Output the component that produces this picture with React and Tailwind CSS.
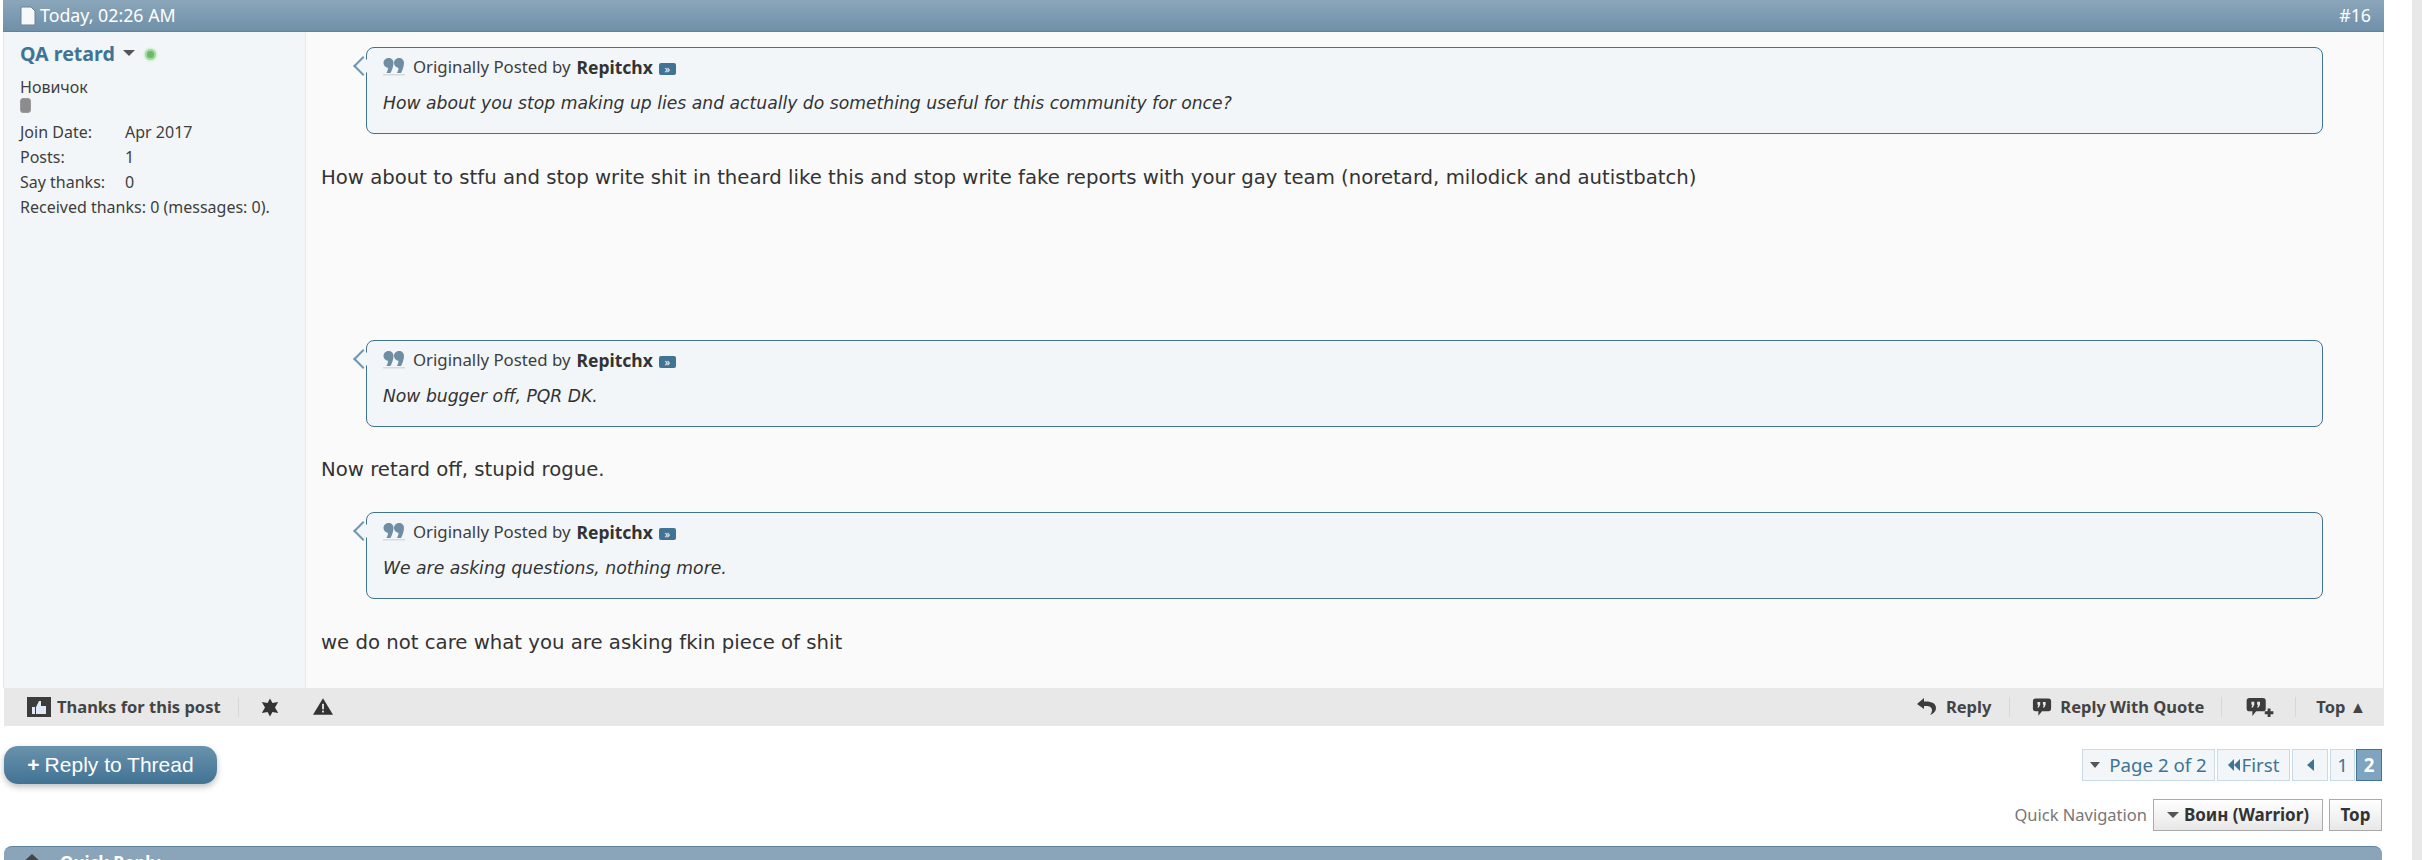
import React from 'react';

const tahoma = "font-['Noto_Sans',sans-serif]";
const verdana = "font-['DejaVu_Sans',sans-serif]";

// Speech-bubble quote marks used in the quote header
function QuoteMarks() {
  return (
    <svg width="22" height="18" viewBox="0 0 22 18" className="shrink-0">
      <path d="M5.500 0C8.500 0 10.500 2 10.500 5c0 3.500-1.500 7-3 10H3.500c1-2 1.500-3.500 1.500-5C2.500 9.500 .5 7.500 .5 5S2.500 0 5.500 0z" fill="#6f8ea3" />
      <path d="M16 0c3 0 5 2 5 5 0 3.500-1.500 7-3 10h-4c1-2 1.500-3.500 1.500-5-2.500-.5-4.500-2.500-4.500-5S13 0 16 0z" fill="#6f8ea3" />
      <rect x="0" y="16" width="22" height="1.500" fill="#d5dade" />
    </svg>
  );
}

function Quote({ text }) {
  return (
    <div className={`relative ml-[60px] mr-[60px] h-[87px] rounded-[8px] border border-[#417394] bg-[#f2f6f9] pl-[16px] pt-[7px] ${tahoma}`}>
      <div className="absolute left-[-11px] top-[11px] h-[14px] w-[14px] rotate-45 border-b-2 border-l-2 border-[#6f97b1] bg-[#f2f6f9]" />
      <div className="relative flex h-[24px] items-center text-[16.8px] text-[#3e3e3e]">
        <QuoteMarks />
        <span className="ml-[8px]">Originally Posted by</span>
        <b className="ml-[6px] text-[17.5px] text-[#333]">Repitchx</b>
        <span className="ml-[6px] mt-[3px] flex h-[12px] w-[17px] items-center justify-center rounded-[2px] bg-[#417394] text-[11px] leading-none text-white">»</span>
      </div>
      <div className={`mt-[11px] text-[17.2px] leading-[26px] italic text-[#333] ${verdana}`}>{text}</div>
    </div>
  );
}

function PostText({ children, className }) {
  return <p className={`ml-[15px] h-[20px] text-[19.7px] leading-[20px] text-[#333] ${verdana} ${className}`}>{children}</p>;
}

function StatRow({ label, value }) {
  return (
    <div className="flex h-[25px] items-center">
      <span className="w-[105px]">{label}</span>
      <span>{value}</span>
    </div>
  );
}

function ThanksIcon() {
  return (
    <svg width="24" height="20" viewBox="0 0 24 20" className="shrink-0">
      <rect width="24" height="20" fill="#3c3c3c" />
      <path d="M5 10h3v7H5zM9 10l3-6h2v5h5v8H9z" fill="#dfe9f5" />
    </svg>
  );
}

function StarIcon() {
  return (
    <svg width="20" height="19" viewBox="0 0 22 20" className="shrink-0">
      <path d="M11 0l2.700 5 6.300-1-3.500 6 3.500 6-6.300-1L11 20l-2.700-5-6.300 1 3.500-6L2 4l6.300 1z" fill="#333" />
    </svg>
  );
}

function WarnIcon() {
  return (
    <svg width="20" height="18" viewBox="0 0 22 19" className="shrink-0">
      <path d="M11 0l11 18H0z" fill="#333" />
      <rect x="10" y="6" width="2" height="6" fill="#e8e8e8" />
      <rect x="10" y="13.500" width="2" height="2" fill="#e8e8e8" />
    </svg>
  );
}

function ReplyIcon() {
  return (
    <svg width="22" height="20" viewBox="0 0 22 20" className="shrink-0">
      <path d="M8 1L1 7l7 5V9c5-.5 8 1 8 4 0 2-1 4-2 5 4-1.500 6-4 6-7 0-5-5-7-12-6.500z" fill="#3c3c3c" />
    </svg>
  );
}

function BubbleIcon({ plus }) {
  return (
    <svg width={plus ? 30 : 20} height="21" viewBox={plus ? '0 0 30 22' : '0 0 22 22'} className="shrink-0">
      <path d="M4 1h14a3 3 0 0 1 3 3v8a3 3 0 0 1-3 3h-7l-4 5v-5H4a3 3 0 0 1-3-3V4a3 3 0 0 1 3-3z" fill="#3c3c3c" />
      <path d="M6 5h3v3l-1.500 3H6l1-3H6zM12 5h3v3l-1.500 3H12l1-3h-1z" fill="#e8e8e8" />
      {plus && <path d="M23 12h3v3h3v3h-3v3h-3v-3h-3v-3h3z" fill="#3c3c3c" />}
    </svg>
  );
}

function Divider() {
  return <span className="h-[20px] w-px bg-[#d8d8d8]" />;
}

function PageBox({ children, className }) {
  return (
    <div className={`flex h-[32px] items-center justify-center border border-[#c9dbe8] bg-[#f2f6f9] text-[#417394] ${className}`}>
      {children}
    </div>
  );
}

function App() {
  return (
    <div className={`flex h-[860px] w-full overflow-hidden bg-white ${tahoma}`}>
      <div className="ml-[3px] w-[2381px] shrink-0">
        {/* post header */}
        <div className="flex h-[32px] items-center justify-between border-b border-[#5d83a0] bg-gradient-to-b from-[#8ba6ba] to-[#6f90a9] pl-[17px] pr-[13px] text-[17.8px] text-white">
          <div className="flex items-center gap-[4px]">
            <svg width="16" height="20" viewBox="0 0 16 20"><path d="M1 1h10l4 4v14H1z" fill="#f6f8f9" stroke="#6a8196" /></svg>
            <span>Today, 02:26 AM</span>
          </div>
          <span>#16</span>
        </div>

        {/* post body */}
        <div className="flex h-[656px] border-l border-[#e6e6e6]">
          <div className="w-[302px] shrink-0 border-r border-[#e6eaed] bg-[#f2f6f9] pl-[16px] pt-[7px] text-[16px] text-[#3e3e3e]">
            <div className="flex h-[30px] items-center">
              <span className="text-[19.6px] font-bold text-[#417394]">QA retard</span>
              <span className="ml-[8px] mb-[3px] h-0 w-0 border-x-[6px] border-t-[6px] border-x-transparent border-t-[#555]" />
              <span className="ml-[10px] h-[11px] w-[11px] rounded-full border-2 border-[#9fdc9a] bg-[#6fb86a] shadow-[0_0_3px_#9fdc9a]" />
            </div>
            <div className="mt-[8px] h-[20px] leading-[20px]">Новичок</div>
            <div className="mt-px h-[15px] w-[11px] rounded-[3px] border border-[#9a9a9a] bg-[#8c8c8c]" />
            <div className="mt-[6px]">
              <StatRow label="Join Date:" value="Apr 2017" />
              <StatRow label="Posts:" value="1" />
              <StatRow label="Say thanks:" value="0" />
              <div className="flex h-[25px] items-center">Received thanks: 0 (messages: 0).</div>
            </div>
          </div>
          <div className="flex-1 border-r border-[#e6e6e6] bg-[#fafafa] pt-[15px]">
            <Quote text="How about you stop making up lies and actually do something useful for this community for once?" />
            <PostText className="mt-[34px]">How about to stfu and stop write shit in theard like this and stop write fake reports with your gay team (noretard, milodick and autistbatch)</PostText>
            <div className="mt-[152px]"><Quote text="Now bugger off, PQR DK." /></div>
            <PostText className="mt-[33px]">Now retard off, stupid rogue.</PostText>
            <div className="mt-[32px]"><Quote text="We are asking questions, nothing more." /></div>
            <PostText className="mt-[34px]">we do not care what you are asking fkin piece of shit</PostText>
          </div>
        </div>

        {/* post footer */}
        <div className="ml-px flex h-[38px] items-center justify-between bg-[#e8e8e8] pl-[23px] pr-[18px] text-[16.5px] font-bold text-[#444]">
          <div className="flex items-center">
            <ThanksIcon />
            <span className="ml-[6px]">Thanks for this post</span>
            <span className="ml-[17px] flex"><Divider /></span>
            <span className="ml-[21px] flex"><StarIcon /></span>
            <span className="ml-[33px] flex"><WarnIcon /></span>
          </div>
          <div className="flex items-center">
            <ReplyIcon />
            <span className="ml-[8px]">Reply</span>
            <span className="ml-[18px] mr-[22px] flex"><Divider /></span>
            <BubbleIcon />
            <span className="ml-[8px]">Reply With Quote</span>
            <span className="ml-[17px] mr-[23px] flex"><Divider /></span>
            <BubbleIcon plus />
            <span className="mx-[20px] flex"><Divider /></span>
            <span>Top ▲</span>
          </div>
        </div>

        {/* actions row */}
        <div className="flex justify-between">
          <div className="ml-px mt-[20px] flex h-[38px] w-[213px] items-center justify-center rounded-[14px] bg-gradient-to-b from-[#6a92ac] to-[#417394] font-['Liberation_Sans',sans-serif] text-[21px] text-white shadow-[0_3px_6px_rgba(0,0,0,0.25)]">
            <b className="mr-[5px]">+</b>Reply to Thread
          </div>
          <div className="flex flex-col items-end pr-[2px] pt-[23px]">
            <div className="flex items-center text-[18.700px]">
              <PageBox className="w-[133px]">
                <span className="mr-[9px] h-0 w-0 border-x-[5px] border-t-[6px] border-x-transparent border-t-[#555]" />
                Page 2 of 2
              </PageBox>
              <PageBox className="ml-[2px] w-[73px]">
                <span className="h-0 w-0 border-y-[6px] border-r-[6px] border-y-transparent border-r-[#417394]" />
                <span className="mr-[2px] h-0 w-0 border-y-[6px] border-r-[6px] border-y-transparent border-r-[#417394]" />
                First
              </PageBox>
              <PageBox className="ml-[2px] w-[36px]">
                <span className="h-0 w-0 border-y-[6px] border-r-[7px] border-y-transparent border-r-[#417394]" />
              </PageBox>
              <PageBox className="ml-[2px] w-[25px] text-[#5c7f97]">1</PageBox>
              <div className="ml-px flex h-[32px] w-[26px] items-center justify-center border border-[#417394] bg-[#7ea4bf] font-bold text-white">2</div>
            </div>
            <div className="mt-[18px] flex items-center">
              <span className="text-[16.5px] text-[#777]">Quick Navigation</span>
              <div className="ml-[6px] flex h-[32px] w-[170px] items-center justify-center border border-[#aaa] bg-gradient-to-b from-white to-[#e8e8e8] text-[17px] font-bold text-[#333]">
                <span className="mr-[5px] h-0 w-0 border-x-[6px] border-t-[6px] border-x-transparent border-t-[#555]" />
                Воин (Warrior)
              </div>
              <div className="ml-[6px] flex h-[32px] w-[53px] items-center justify-center border border-[#aaa] bg-gradient-to-b from-white to-[#e8e8e8] text-[17px] font-bold text-[#333]">Top</div>
            </div>
          </div>
        </div>

        {/* quick reply header, cut off by the window */}
        <div className="ml-px mr-[2px] mt-[15px] flex h-[32px] items-center rounded-t-[8px] border-t border-[#5d83a0] bg-[#8aa5b9] pl-[16px] text-[17px] text-white">
          <svg width="24" height="20" viewBox="0 0 24 20" className="shrink-0"><path d="M12 1l11 10H1z" fill="#444" /></svg>
          <span className="ml-[16px] font-bold">Quick Reply</span>
        </div>
      </div>
      <div className="ml-auto h-full w-[10px] bg-[#e8e8e8]" />
    </div>
  );
}

export default App;
